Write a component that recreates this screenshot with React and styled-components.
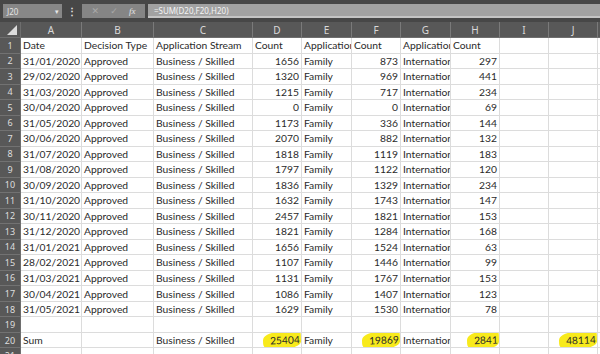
import React from "react";
import styled, { createGlobalStyle } from "styled-components";

const GlobalStyle = createGlobalStyle`
  html, body {
    margin: 0;
    padding: 0;
    background: #ffffff;
  }
  body {
    font-family: "Lato", "Liberation Sans", sans-serif;
  }
`;

const dates = [
  "31/01/2020", "29/02/2020", "31/03/2020", "30/04/2020", "31/05/2020",
  "30/06/2020", "31/07/2020", "31/08/2020", "30/09/2020", "31/10/2020",
  "30/11/2020", "31/12/2020", "31/01/2021", "28/02/2021", "31/03/2021",
  "30/04/2021", "31/05/2021",
];
const business = [1656, 1320, 1215, 0, 1173, 2070, 1818, 1797, 1836, 1632, 2457, 1821, 1656, 1107, 1131, 1086, 1629];
const family = [873, 969, 717, 0, 336, 882, 1119, 1122, 1329, 1743, 1821, 1284, 1524, 1446, 1767, 1407, 1530];
const intl = [297, 441, 234, 69, 144, 132, 183, 120, 234, 147, 153, 168, 63, 99, 153, 123, 78];

const columns = ["A", "B", "C", "D", "E", "F", "G", "H", "I", "J", ""];

const rows = [
  ["Date", "Decision Type", "Application Stream", "Count", "Application", "Count", "Application", "Count", "", "", ""],
  ...dates.map((d, i) => [
    d, "Approved", "Business / Skilled", business[i], "Family", family[i], "International", intl[i], "", "", "",
  ]),
  ["", "", "", "", "", "", "", "", "", "", ""],
  ["Sum", "", "Business / Skilled", 25404, "Family", 19869, "International", 2841, "", 48114, ""],
  ["", "", "", "", "", "", "", "", "", "", ""],
];

// cells marked with the yellow highlighter (row-col)
const highlighted = { "20-3": true, "20-5": true, "20-7": true, "20-9": true };

const App = () => {
  return (
    <>
      <GlobalStyle />
      <Window>
        <TopBar>
          <NameBox>
            <span>J20</span>
            <Caret>▾</Caret>
          </NameBox>
          <Dots>⋮</Dots>
          <FuncBox>
            <FuncIcon>✕</FuncIcon>
            <FuncIcon>✓</FuncIcon>
            <FuncIcon $italic>fx</FuncIcon>
          </FuncBox>
          <FormulaBar>=SUM(D20,F20,H20)</FormulaBar>
        </TopBar>
        <Sheet>
          <Corner>
            <CornerTriangle />
          </Corner>
          {columns.map((c, i) => (
            <ColHeader key={"h" + i}>{c}</ColHeader>
          ))}
          {rows.map((row, r) => (
            <React.Fragment key={r}>
              <RowHeader>{r + 1}</RowHeader>
              {row.map((value, c) => {
                const numeric = typeof value === "number";
                const mark = highlighted[`${r + 1}-${c}`];
                return (
                  <Cell key={c} $numeric={numeric}>
                    {mark ? <Marker>{value}</Marker> : value}
                  </Cell>
                );
              })}
            </React.Fragment>
          ))}
        </Sheet>
      </Window>
    </>
  );
};

const Window = styled.div`
  width: 600px;
  height: 354px;
  overflow: hidden;
  background: #ffffff;
`;

const TopBar = styled.div`
  display: flex;
  align-items: center;
  height: 22px;
  background: #474747;
  padding: 0 0 0 3px;
  box-sizing: border-box;
`;

const NameBox = styled.div`
  display: flex;
  align-items: center;
  justify-content: space-between;
  width: 59px;
  height: 14px;
  background: #878787;
  color: #e4e4e4;
  font-family: "Noto Sans", sans-serif;
  font-size: 8px;
  padding: 0 3px 0 4px;
  box-sizing: border-box;
`;

const Caret = styled.span`
  font-size: 7px;
  color: #e8e8e8;
`;

const Dots = styled.div`
  width: 20px;
  text-align: center;
  color: #e0e0e0;
  font-size: 10px;
  font-weight: bold;
`;

const FuncBox = styled.div`
  display: flex;
  align-items: center;
  justify-content: space-around;
  width: 63px;
  height: 14px;
  background: #858585;
  padding: 0 4px;
  box-sizing: border-box;
`;

const FuncIcon = styled.span`
  color: ${(props) => (props.$italic ? "#e6e6e6" : "#a9a9a9")};
  font-family: ${(props) => (props.$italic ? '"Liberation Serif", serif' : '"DejaVu Sans", sans-serif')};
  font-style: ${(props) => (props.$italic ? "italic" : "normal")};
  font-size: 9px;
`;

const FormulaBar = styled.div`
  flex: 1;
  height: 14px;
  margin-left: 3px;
  display: flex;
  align-items: center;
  background: #a2a2a2;
  border-bottom: 2px solid #c4c4c4;
  color: #f4f4f4;
  font-family: "Noto Sans", sans-serif;
  font-size: 8px;
  padding-left: 6px;
  box-sizing: border-box;
`;

const Sheet = styled.div`
  display: grid;
  grid-template-columns: 21px 61px 72px 99px 49px 50px 49px 50px 49px 49px 49px 1fr;
  grid-template-rows: 16px;
  grid-auto-rows: 15.53px;
  background: #ffffff;
`;

const Corner = styled.div`
  position: relative;
  background: #585858;
  border-right: 1px solid #6e6e6e;
  border-bottom: 1px solid #6e6e6e;
`;

const CornerTriangle = styled.div`
  position: absolute;
  right: 3px;
  bottom: 2px;
  width: 0;
  height: 0;
  border-left: 10px solid transparent;
  border-bottom: 10px solid #dcdcdc;
`;

const ColHeader = styled.div`
  display: flex;
  align-items: center;
  justify-content: center;
  background: #585858;
  color: #dadada;
  font-family: "Noto Sans", sans-serif;
  font-size: 10px;
  border-right: 1px solid #7a7a7a;
  border-bottom: 1px solid #6e6e6e;
  box-sizing: border-box;
`;

const RowHeader = styled.div`
  display: flex;
  align-items: center;
  justify-content: center;
  background: #585858;
  color: #dedede;
  font-family: "Noto Sans", sans-serif;
  font-size: 9px;
  border-bottom: 1px solid #727272;
  border-right: 1px solid #6e6e6e;
  box-sizing: border-box;
`;

const Cell = styled.div`
  display: flex;
  align-items: center;
  justify-content: ${(props) => (props.$numeric ? "flex-end" : "flex-start")};
  padding: 0 2px 0 2px;
  border-right: 1px solid #dcdcdc;
  border-bottom: 1px solid #dcdcdc;
  box-sizing: border-box;
  color: #2a2a2a;
  font-size: 10.3px;
  white-space: nowrap;
  overflow: hidden;
  text-overflow: clip;
`;

const Marker = styled.span`
  background: #f8ea1c;
  padding: 2px 1px 2px 7px;
  margin-right: -2px;
  border-radius: 40% 8% 30% 12% / 50% 20% 40% 30%;
  transform: rotate(-2deg);
`;

export default App;
